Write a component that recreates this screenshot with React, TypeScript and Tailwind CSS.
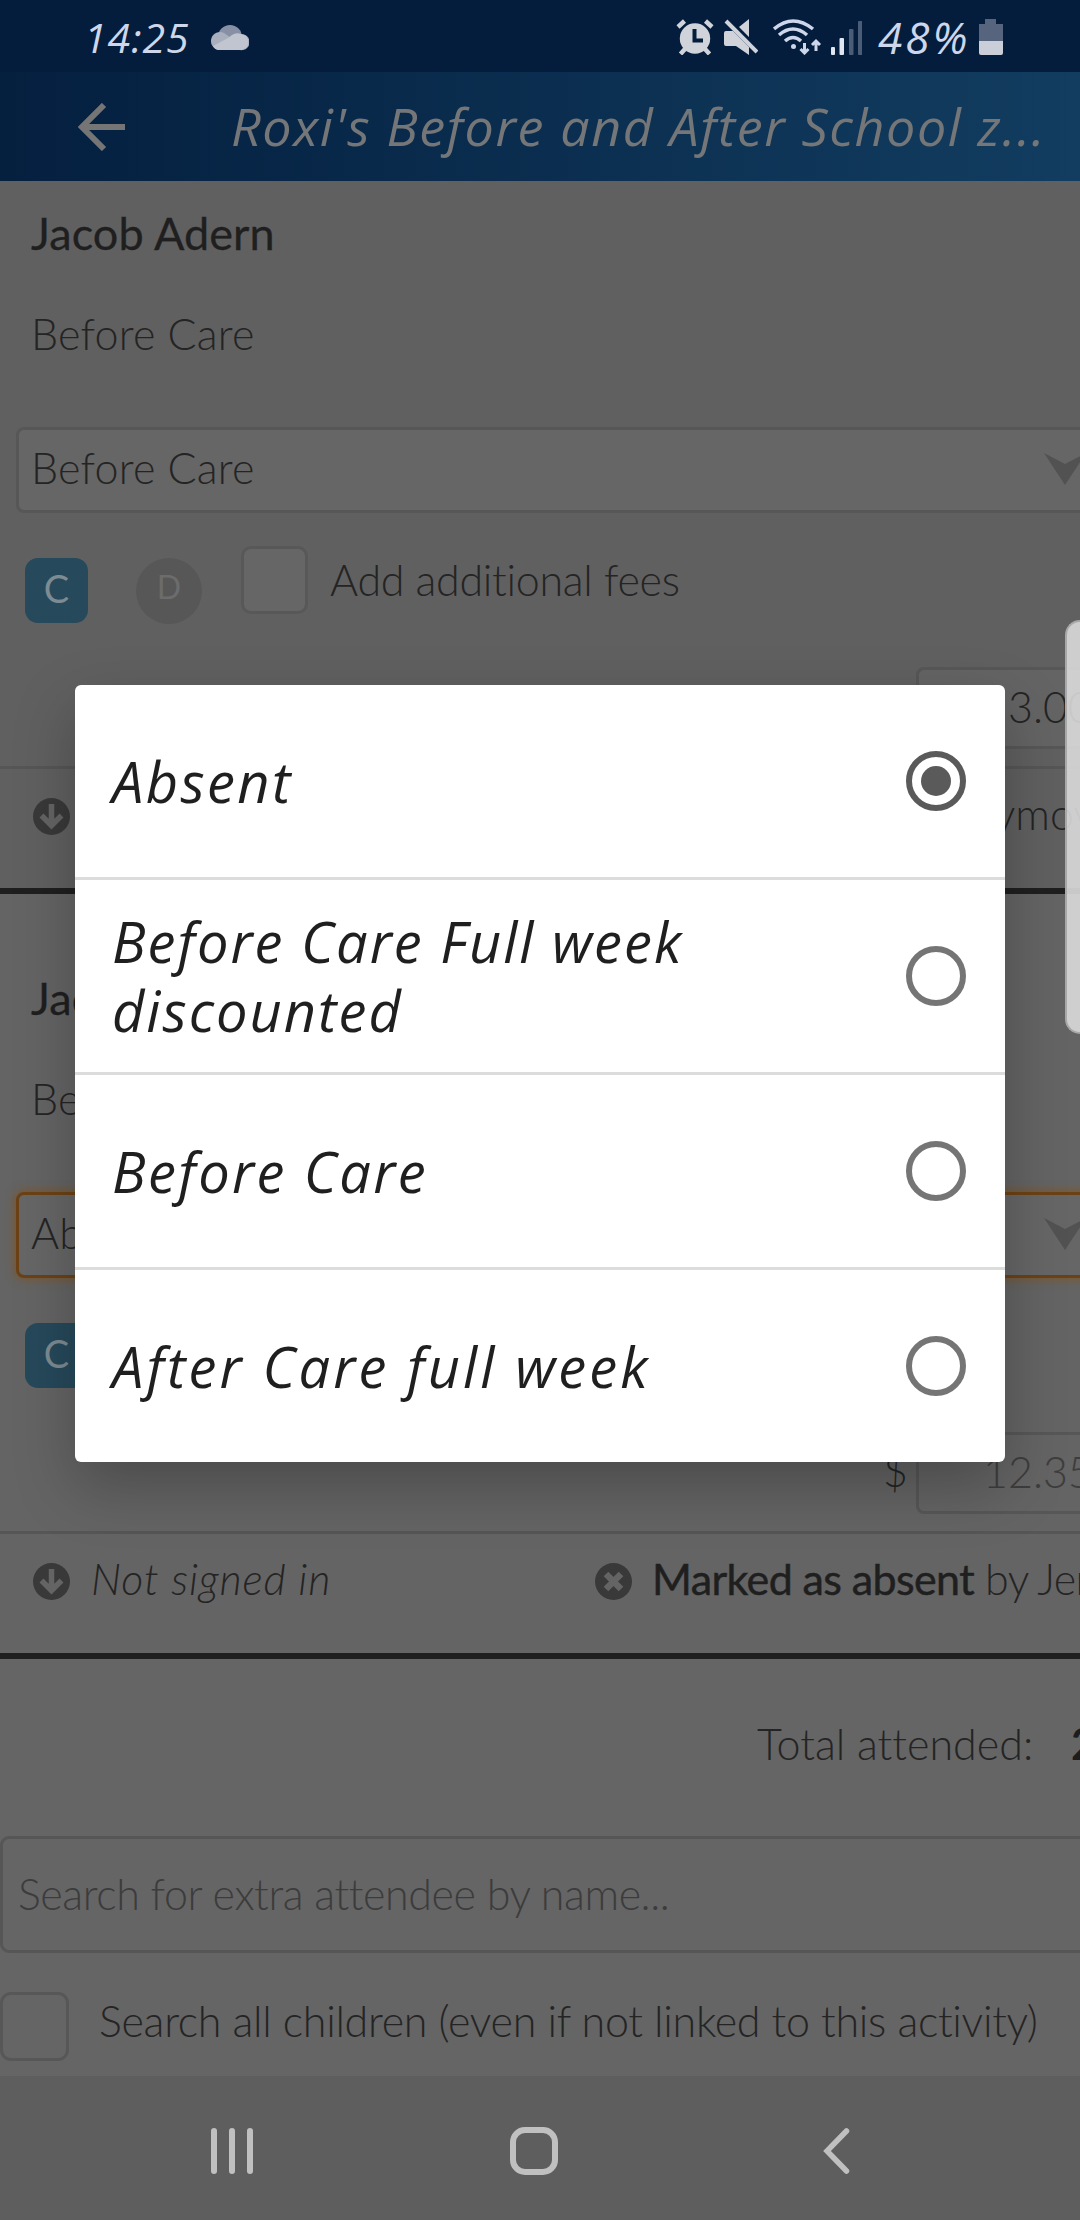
import { clsx } from 'clsx';

type Attendee = {
  name: string;
  service: string;
  selected: string;
  amount: string;
  first?: boolean;
  focused?: boolean;
  absent?: boolean;
};

const attendees: Attendee[] = [
  {
    name: 'Jacob Adern',
    service: 'Before Care',
    selected: 'Before Care',
    amount: '13.00',
    first: true,
  },
  {
    name: 'Jacob Adern',
    service: 'Before Care',
    selected: 'Absent',
    amount: '12.35',
    focused: true,
    absent: true,
  },
];

const options = [
  { lines: ['Absent'], tracking: 'tracking-[2.4px]', checked: true },
  {
    lines: ['Before Care Full week', 'discounted'],
    tracking: 'tracking-[2px]',
  },
  { lines: ['Before Care'], tracking: 'tracking-[2.4px]' },
  { lines: ['After Care full week'], tracking: 'tracking-[3.1px]' },
];

const StatusBar = () => (
  <div className="flex h-[72px] shrink-0 items-start bg-[#041d3d] pt-[19px] pl-[84px] font-['Open_Sans',sans-serif] text-[#cdd6ea] italic">
    <span className="-mt-[2px] w-[126px] text-[41px] leading-[40px] font-medium tracking-[1px]">
      14:25
    </span>
    <svg className="mt-[6px] h-[26px] w-[39px]" viewBox="0 0 39 26">
      <circle cx="20" cy="12" r="12" fill="#8790a5" />
      <path
        d="M9 25a9 9 0 1 1 5-17l10 7 4-5a8 8 0 1 1 2 15z"
        fill="#a9afbe"
      />
      <path d="M3 21 18 13l4-3a9 9 0 0 1 9-1 8 8 0 0 1-1 16H9q-4 0-6-4z" fill="#c0c5cf" />
    </svg>

    {/* Alarm */}
    <svg className="ml-[427px] h-9 w-[38px]" viewBox="0 0 38 36">
      <circle cx="19" cy="19.500" r="15.200" fill="#d0d3da" />
      <path
        d="M2 8l6.500-6M36 8l-6.500-6"
        stroke="#d0d3da"
        strokeWidth="4.500"
      />
      <path
        d="M9 30l-4.500 5M29 30l4.500 5"
        stroke="#d0d3da"
        strokeWidth="4.500"
      />
      <path d="M18.500 10v11.500H27" stroke="#041d3d" strokeWidth="4" fill="none" />
    </svg>
    {/* Muted speaker */}
    <svg className="ml-[10px] h-9 w-[34px]" viewBox="0 0 34 36">
      <path d="M25 0v18L15 8zM0 14q0-2 2-2h7l16 16v8L12 27H2q-2 0-2-2z" fill="#d0d3da" />
      <path d="M4 0l31 31" stroke="#041d3d" strokeWidth="2.500" />
      <path d="M2 2l31 31" stroke="#d0d3da" strokeWidth="4" />
    </svg>
    {/* Wifi */}
    <svg
      className="ml-[15px] h-9 w-[49px]"
      viewBox="0 0 49 36"
      fill="none"
      stroke="#cdd6ea"
      strokeWidth="3.500"
    >
      <path d="M1 10Q20-6 40 10M6 16Q20 4 34 16M12 22Q20 15 28 22" />
      <circle cx="20.500" cy="27.500" r="2.500" fill="#cdd6ea" stroke="none" />
      <path d="M31.500 24v10M27.500 30l4 4 4-4M43 32V22M39 26l4-4 4 4" strokeWidth="3" />
    </svg>
    {/* Signal */}
    <svg className="ml-[9px] h-9 w-[31px]" viewBox="0 0 31 36">
      <rect y="28" width="4" height="8" rx="1" fill="#dfe6f2" />
      <rect x="8.500" y="19" width="4.500" height="17" rx="1" fill="#dfe6f2" />
      <rect x="18" y="10" width="4.500" height="26" rx="1" fill="#4b5c77" />
      <rect x="27" y="2" width="4.500" height="34" rx="1" fill="#4b5c77" />
    </svg>
    <span className="-mt-[2px] ml-[16px] w-[101px] text-[44px] leading-[40px] font-medium tracking-[3px]">
      48%
    </span>
    <svg className="h-9 w-6" viewBox="0 0 24 36">
      <path d="M6 0h11v5h7v17H0V5h6z" fill="#56657d" />
      <path d="M0 22h24v12q0 2-2 2H2q-2 0-2-2z" fill="#c9ced8" />
    </svg>
  </div>
);

const AppBar = () => (
  <div className="flex h-[109px] shrink-0 items-center bg-linear-to-r from-[#051f3f] to-[#123d60] pl-[78px]">
    <svg
      className="h-12 w-12 shrink-0"
      viewBox="0 0 48 48"
      fill="none"
      stroke="#757575"
      strokeWidth="6"
    >
      <path d="M47 24H4M26 2 4 24l22 22" />
    </svg>
    <h1 className="ml-[105px] pb-[2px] font-['Open_Sans',sans-serif] text-[52px] leading-[70px] font-normal tracking-[1.6px] whitespace-nowrap text-[#757678] italic">
      Roxi's Before and After School z...
    </h1>
  </div>
);

const ArrowDownCircle = () => (
  <svg className="h-[37px] w-[37px] shrink-0" viewBox="0 0 37 37">
    <circle cx="18.500" cy="18.500" r="18.500" fill="#393939" />
    <path
      d="M18.500 6v21M8.500 17.500l10 10 10-10"
      stroke="#646464"
      strokeWidth="5.500"
      fill="none"
    />
  </svg>
);

const CrossCircle = () => (
  <svg className="h-[37px] w-[37px] shrink-0" viewBox="0 0 37 37">
    <circle cx="18.500" cy="18.500" r="18.500" fill="#393939" />
    <path d="M11 11l15 15M26 11 11 26" stroke="#646464" strokeWidth="6.500" />
  </svg>
);

const AttendeeBlock = ({
  name,
  service,
  selected,
  amount,
  first,
  focused,
  absent,
}: Attendee) => (
  <section
    className={clsx(
      'flex shrink-0 flex-col border-b-[6px] border-[#1f1f1f]',
      first ? 'h-[713px] bg-[#606060] pt-[22px]' : 'h-[765px] bg-[#646464] pt-[74px]'
    )}
  >
    <h2 className="pl-[31px] text-[45px] leading-[60px] font-normal tracking-[0.1px] text-[#1f1f1f] [-webkit-text-stroke:0.3px_#1f1f1f]">
      {name}
    </h2>
    <p className="mt-[41px] pl-[31px] leading-[60px] tracking-[0.2px]">
      {service}
    </p>

    <div
      className={clsx(
        'mt-[63px] ml-4 flex h-[86px] w-[1080px] shrink-0 items-center rounded-[8px] border-[3px] bg-[#666666] pb-[3px] pl-[12px]',
        focused
          ? 'border-[#6b4215] shadow-[0_0_10px_1px_#7d5529]'
          : 'border-[#575757]'
      )}
    >
      <span className="w-[1012px] shrink-0 tracking-[0.2px]">{selected}</span>
      <svg className="h-8 w-[44px] shrink-0" viewBox="0 0 44 32">
        <path d="M1 0 22 11 43 0 22 32z" fill="#525252" />
      </svg>
    </div>

    <div className="mt-[33px] flex h-[102px] shrink-0 items-start">
      <span className="mt-3 ml-[25px] flex h-[65px] w-[63px] items-center justify-center rounded-[13px] bg-[#26495b] pb-[4px] text-[38px] font-normal text-[#7d8b92]">
        C
      </span>
      <span className="mt-3 ml-12 flex h-[66px] w-[66px] items-center justify-center rounded-full bg-[#575757] pb-[9px] text-[32px] font-normal text-[#6c6c6c]">
        D
      </span>
      <span className="ml-[39px] h-[68px] w-[67px] rounded-[10px] border-[3px] border-[#585858] bg-[#666666]" />
      <span className="mt-[4px] ml-[22px] leading-[60px] tracking-[-0.3px]">
        Add additional fees
      </span>
    </div>

    <div className="flex h-[118px] shrink-0 items-start pt-[19px] pl-[883px]">
      <span className="w-[33px] shrink-0 pt-[9px] leading-[60px]">$</span>
      <div className="flex h-[82px] w-[220px] shrink-0 items-center rounded-[8px] border-[3px] border-[#575757] bg-[#646464] pb-[2px] pl-[64px]">
        <span className={absent ? 'text-[#3d3d3d]' : ''}>{amount}</span>
      </div>
    </div>

    <div className="flex grow items-start border-t-[3px] border-[#565656] pt-[15px] pl-[33px] whitespace-nowrap">
      <div className="flex w-[562px] shrink-0 items-start">
        <span className="pt-[14px]">
          <ArrowDownCircle />
        </span>
        <em className="ml-[21px] leading-[60px] tracking-[0.85px]">
          Not signed in
        </em>
      </div>
      {absent ? (
        <>
          <span className="pt-[14px]">
            <CrossCircle />
          </span>
          <span className="ml-[20px] leading-[60px] tracking-[-0.6px]">
            <strong className="font-normal text-[#1f1f1f] [-webkit-text-stroke:0.5px_#1f1f1f]">
              Marked as absent
            </strong>{' '}
            by Jen
          </span>
        </>
      ) : (
        <span className="ml-[354px] leading-[60px]">Seymov</span>
      )}
    </div>
  </section>
);

const ExtraAttendees = () => (
  <section className="flex grow flex-col overflow-hidden bg-[#656565]">
    <div className="mt-[55px] flex shrink-0 pl-[757px] leading-[60px] tracking-[0.01px] whitespace-nowrap">
      <span className="w-[314px] shrink-0">Total attended:</span>
      <strong className="font-bold text-[#1d1d1d]">2</strong>
    </div>
    <div className="mt-[62px] flex h-[117px] w-[1120px] shrink-0 items-center rounded-[9px] border-[3px] border-[#565656] pl-[15px] tracking-[-0.43px] text-[#3c3c3c]">
      Search for extra attendee by name...
    </div>
    <label className="mt-[39px] flex items-start">
      <span className="h-[69px] w-[69px] shrink-0 rounded-[11px] border-[3px] border-[#575757]" />
      <span className="-mt-px ml-[30px] leading-[60px] tracking-[-0.3px] whitespace-nowrap">
        Search all children (even if not linked to this activity)
      </span>
    </label>
  </section>
);

const NavBar = () => (
  <nav className="flex h-36 shrink-0 items-start bg-[#5e5e5e] pt-[51px] pl-[211px]">
    <div className="flex h-12 w-[299px] gap-3 py-px">
      <span className="w-[6px] rounded-full bg-[#c0c0c0]" />
      <span className="w-[6px] rounded-full bg-[#c0c0c0]" />
      <span className="w-[6px] rounded-full bg-[#c0c0c0]" />
    </div>
    <span className="h-12 w-12 rounded-[15px] border-[6px] border-[#c0c0c0]" />
    <svg
      className="ml-[265px] h-12 w-[28px]"
      viewBox="0 0 28 48"
      fill="none"
      stroke="#c0c0c0"
      strokeWidth="5.500"
      strokeLinecap="round"
    >
      <path d="M23.500 4 4 24l19.500 20" />
    </svg>
  </nav>
);

const OptionDialog = () => (
  <div
    role="dialog"
    className="absolute top-[685px] left-[75px] w-[930px] divide-y-[3px] divide-[#dcdcdc] rounded-[6px] bg-white shadow-[0_24px_60px_rgba(0,0,0,0.25)]"
  >
    {options.map((option) => (
      <div
        key={option.lines[0]}
        className="flex h-[195px] items-center justify-between pr-[39px] pl-[37px] last:h-[192px]"
      >
        <div
          className={clsx(
            "font-['Open_Sans',sans-serif] text-[56px] leading-[69px] font-medium whitespace-nowrap text-[#1f1f1f] italic",
            option.tracking
          )}
        >
          {option.lines.map((line) => (
            <div key={line}>{line}</div>
          ))}
        </div>
        <span
          className={clsx(
            'flex h-[60px] w-[60px] items-center justify-center rounded-full border-[6px]',
            option.checked ? 'border-[#5a5a5a]' : 'border-[#757575]'
          )}
        >
          {option.checked && (
            <span className="h-[30px] w-[30px] rounded-full bg-[#5a5a5a]" />
          )}
        </span>
      </div>
    ))}
  </div>
);

const App = () => {
  return (
    <div className="relative flex h-[2220px] w-[1080px] flex-col overflow-hidden bg-[#606060] font-['Lato',sans-serif] text-[43px] font-light text-[#242424]">
      <StatusBar />
      <AppBar />
      {attendees.map((attendee) => (
        <AttendeeBlock key={attendee.selected} {...attendee} />
      ))}
      <ExtraAttendees />
      <NavBar />

      <OptionDialog />
      {/* Edge panel handle */}
      <div className="absolute top-[620px] right-0 h-[414px] w-[15px] rounded-l-[15px] border-y-2 border-l-2 border-[#a8a8a8] bg-[#dadada]/90" />
    </div>
  );
};

export default App;
